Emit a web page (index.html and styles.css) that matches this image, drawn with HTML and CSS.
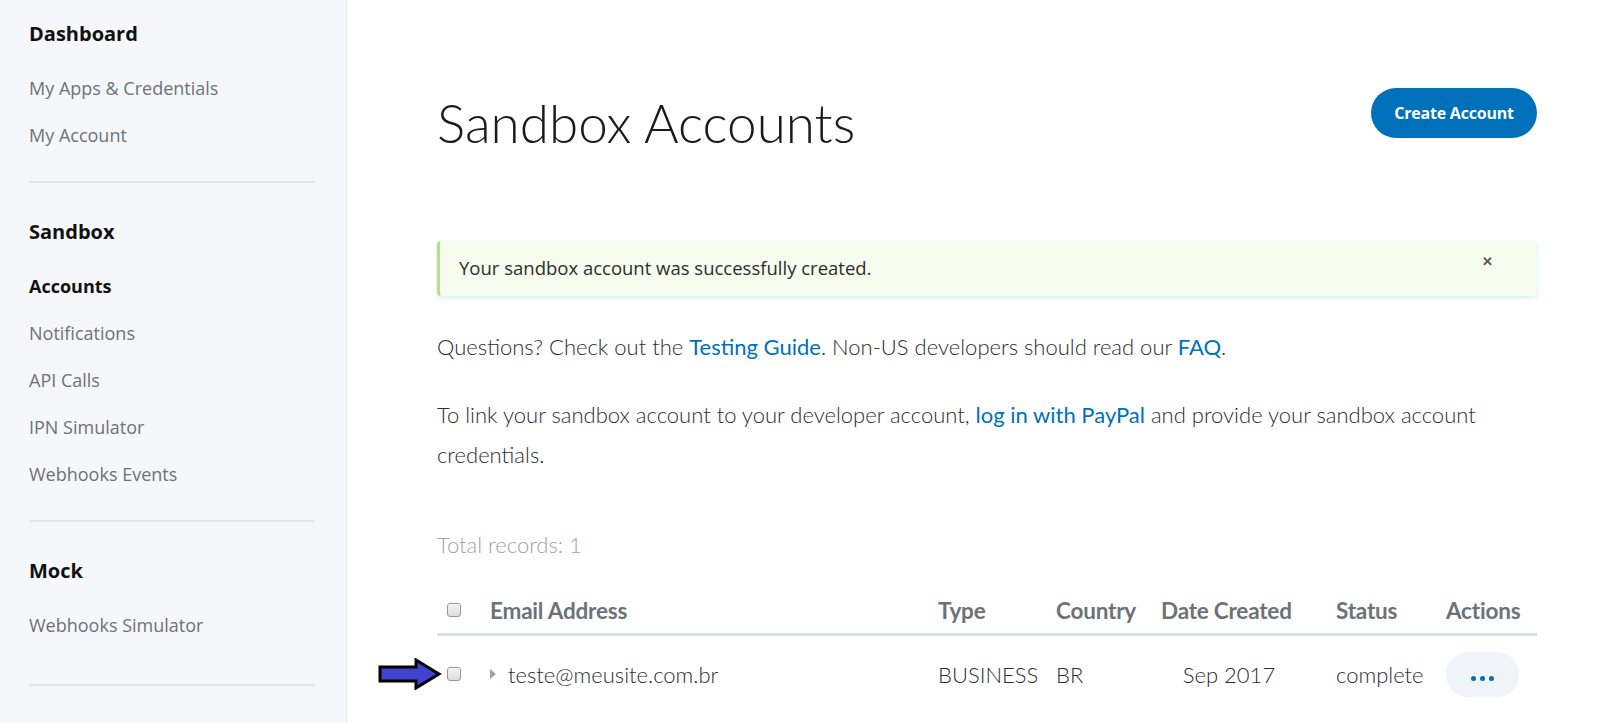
FILE: index.html
```html
<!DOCTYPE html>
<html>
<head>
<meta charset="utf-8">
<link rel="stylesheet" href="styles.css">
</head>
<body>
<aside class="sidebar">
  <div class="nav-group">
    <h3 class="nav-title">Dashboard</h3>
    <a class="nav-link">My Apps &amp; Credentials</a>
    <a class="nav-link">My Account</a>
  </div>
  <div class="nav-group">
    <h3 class="nav-title">Sandbox</h3>
    <a class="nav-link active">Accounts</a>
    <a class="nav-link">Notifications</a>
    <a class="nav-link">API Calls</a>
    <a class="nav-link">IPN Simulator</a>
    <a class="nav-link">Webhooks Events</a>
  </div>
  <div class="nav-group last">
    <h3 class="nav-title">Mock</h3>
    <a class="nav-link">Webhooks Simulator</a>
  </div>
</aside>
<main class="main">
  <div class="page-head">
    <h1 class="page-title">Sandbox Accounts</h1>
    <button class="btn-primary">Create Account</button>
  </div>
  <div class="alert">
    <span>Your sandbox account was successfully created.</span>
    <span class="alert-close">&#x2715;</span>
  </div>
  <p class="copy">Questions? Check out the <a class="link">Testing Guide</a>. Non-US developers should read our <a class="link">FAQ</a>.</p>
  <p class="copy">To link your sandbox account to your developer account, <a class="link">log in with PayPal</a> and provide your sandbox account credentials.</p>
  <p class="total">Total records: 1</p>
  <div class="table">
    <div class="row head">
      <div class="cell"><span class="checkbox"></span></div>
      <div class="cell">Email Address</div>
      <div class="cell">Type</div>
      <div class="cell">Country</div>
      <div class="cell">Date Created</div>
      <div class="cell">Status</div>
      <div class="cell">Actions</div>
    </div>
    <div class="row body">
      <div class="cell cb-cell"><span class="checkbox"></span>
        <svg class="pointer" width="66" height="32" viewBox="0 0 66 32"><path d="M3 9 H39 V2 L62 16 L39 30 V23 H3 Z" fill="#3f43cf" stroke="#000" stroke-width="3" stroke-linejoin="miter"/></svg>
      </div>
      <div class="cell email"><span class="caret"></span>teste@meusite.com.br</div>
      <div class="cell">BUSINESS</div>
      <div class="cell">BR</div>
      <div class="cell"><span class="date">Sep 2017</span></div>
      <div class="cell">complete</div>
      <div class="cell"><span class="more"><i></i><i></i><i></i></span></div>
    </div>
  </div>
</main>
</body>
</html>
```

FILE: styles.css
```css
html, body { margin: 0; padding: 0; }
body {
  display: flex;
  min-height: 723px;
  background: #fff;
  font-family: "Open Sans", "Noto Sans", sans-serif;
  overflow: hidden;
}
.sidebar {
  width: 347px;
  flex: none;
  background: #f5f7fa;
  border-right: 1px solid #e6e8eb;
  padding: 0 31px 0 29px;
  box-sizing: border-box;
}
.nav-group {
  border-bottom: 2px solid #e3e5e8;
  padding: 34px 0 22px;
  display: flex;
  flex-direction: column;
}
.nav-group:first-child { padding-top: 19px; }
.nav-group.last { padding-bottom: 35px; }
.nav-title {
  margin: 0 0 16px;
  font-size: 20px;
  font-weight: 700;
  color: #111;
  line-height: 30px;
}
.nav-link {
  font-size: 18px;
  color: #6c7378;
  line-height: 47px;
}
.nav-link.active { color: #111; font-weight: 700; }
.main {
  flex: 1;
  padding: 0 63px 0 90px;
  font-family: "Lato", "Open Sans", sans-serif;
  position: relative;
}
.page-head {
  display: flex;
  justify-content: space-between;
  align-items: flex-start;
  padding-top: 88px;
}
.page-title {
  margin: 0;
  font-weight: 300;
  font-size: 53px;
  color: #1a1a1a;
  line-height: 74px;
  margin-top: -2px;
  margin-bottom: -8px;
}
.btn-primary {
  background: #0070ba;
  color: #fff;
  border: 0;
  border-radius: 25px;
  height: 50px;
  width: 166px;
  font-family: "Open Sans", sans-serif;
  font-weight: 700;
  font-size: 16px;
  letter-spacing: -0.2px;
}
.alert {
  margin-top: 89px;
  height: 55px;
  box-sizing: border-box;
  background: #f6fdee;
  border-left: 3px solid #b9dc8f;
  border-radius: 4px;
  box-shadow: 0 2px 4px rgba(120, 220, 210, 0.35);
  display: flex;
  align-items: center;
  justify-content: space-between;
  padding: 0 44px 2px 19px;
  font-family: "Open Sans", sans-serif;
  font-size: 18.5px;
  color: #2c2e2f;
}
.alert-close { font-size: 13px; color: #555; font-weight: 700; margin-top: -14px; }
.copy {
  margin: 31px 0 0;
  font-size: 22px;
  font-weight: 300;
  line-height: 40px;
  color: #2c2e2f;
}
.copy + .copy { margin-top: 28px; }
.link { color: #0070ba; font-weight: 400; }
.total {
  margin: 55px 0 0;
  font-size: 22px;
  font-weight: 300;
  color: #9da3a6;
  line-height: 30px;
}
.table { margin-top: 27px; }
.row {
  display: grid;
  grid-template-columns: 53px 448px 118px 105px 175px 110px 1fr;
  align-items: center;
}
.row.head {
  height: 46px;
  border-bottom: 3px solid #dcdfe2;
  font-weight: 700;
  font-size: 22.5px;
  color: #6c7378;
  font-family: "Lato", sans-serif;
  letter-spacing: -0.2px;
}
.row.body {
  height: 76px;
  font-size: 22px;
  font-weight: 300;
  color: #2c2e2f;
  padding-bottom: 2px;
}
.cell { white-space: nowrap; }
.cb-cell { position: relative; }
.checkbox {
  display: block;
  width: 12px;
  height: 12px;
  margin-left: 10px;
  border: 1px solid #9a9a9a;
  border-radius: 3px;
  background: linear-gradient(#f4f4f4, #dcdcdc);
}
.pointer { position: absolute; left: -60px; top: -9px; }
.email { display: flex; align-items: center; }
.caret {
  width: 0; height: 0;
  border-top: 5px solid transparent;
  border-bottom: 5px solid transparent;
  border-left: 6px solid #a0a4a7;
  margin: 0 12px 0 0;
}
.date { display: inline-block; width: 136px; text-align: center; }
.more {
  display: flex;
  width: 73px;
  height: 45px;
  border-radius: 22px;
  background: #f0f3f7;
  align-items: center;
  justify-content: center;
  gap: 4px;
  padding-top: 8px;
  box-sizing: border-box;
}
.more i { width: 5px; height: 5px; border-radius: 50%; background: #0070ba; }
```
